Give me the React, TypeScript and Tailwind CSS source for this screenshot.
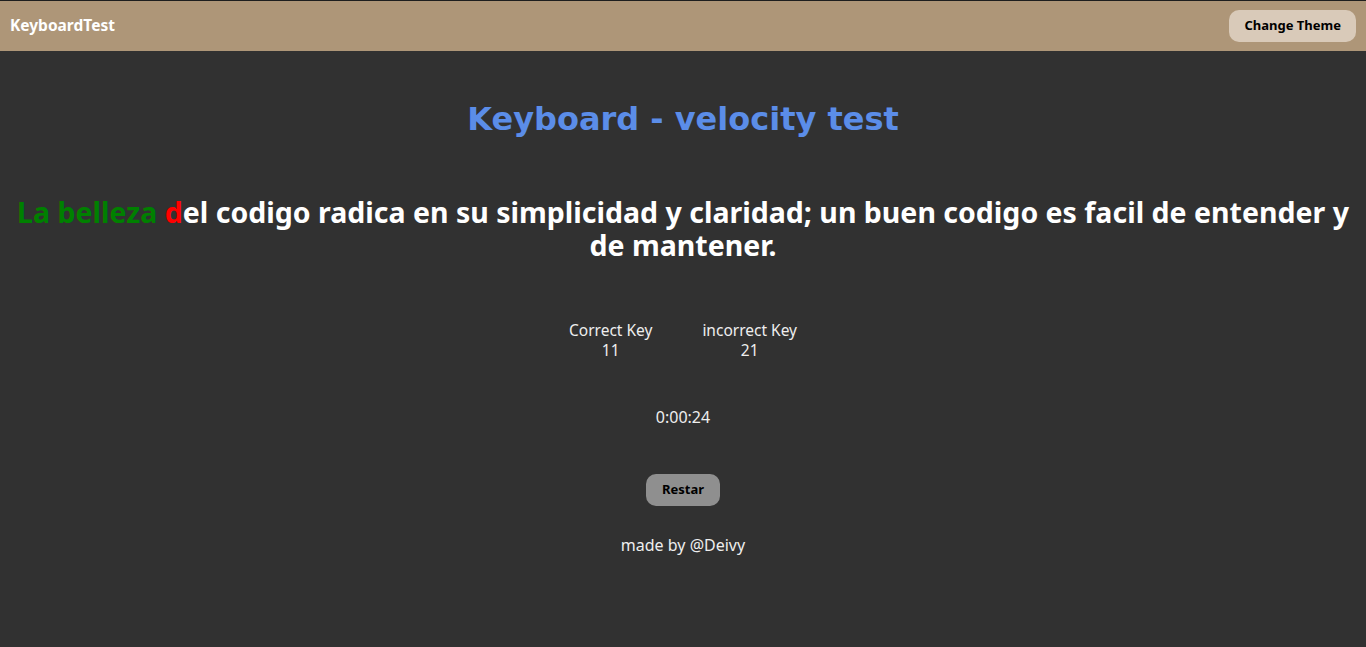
export default function App() {
  const font = { fontFamily: '"Noto Sans", "Open Sans", sans-serif' }
  return (
    <div className="min-h-[647px] bg-[#313131] border-t border-[#1e1e1e]" style={font}>
      <header className="h-[50px] bg-[#ae9678] flex items-center justify-between px-[10px]">
        <span className="text-white font-bold text-[15.5px]">KeyboardTest</span>
        <button className="bg-[#d9cab9] rounded-[10px] h-[32px] px-[15px] text-[13px] font-bold text-black">Change Theme</button>
      </header>
      <main className="flex flex-col items-center">
        <h1 className="mt-[49px] text-[#5b8de8] text-[32px] font-bold leading-[38px]" style={{ fontFamily: '"DejaVu Sans", sans-serif' }}>
          Keyboard - velocity test
        </h1>
        <p className="mt-[58px] text-center text-white font-bold text-[28.5px] leading-[33px] px-[10px]">
          <span className="text-[#008000]">La belleza </span>
          <span className="text-[#ff0000]">d</span>
          el codigo radica en su simplicidad y claridad; un buen codigo es facil de entender y de mantener.
        </p>
        <div className="mt-[58px] flex gap-[50px] text-[#eeeeee] text-[15.5px] leading-[20px] text-center">
          <div className="flex flex-col">
            <span>Correct Key</span>
            <span>11</span>
          </div>
          <div className="flex flex-col">
            <span>incorrect Key</span>
            <span>21</span>
          </div>
        </div>
        <div className="mt-[47px] text-[#eeeeee] text-[16px] leading-[20px]">0:00:24</div>
        <button className="mt-[47px] bg-[#8f8f8f] rounded-[10px] h-[32px] w-[74px] text-[13px] font-bold text-black">Restar</button>
        <div className="mt-[30px] text-[#eeeeee] text-[16px] leading-[19px]">made by @Deivy</div>
      </main>
    </div>
  )
}
